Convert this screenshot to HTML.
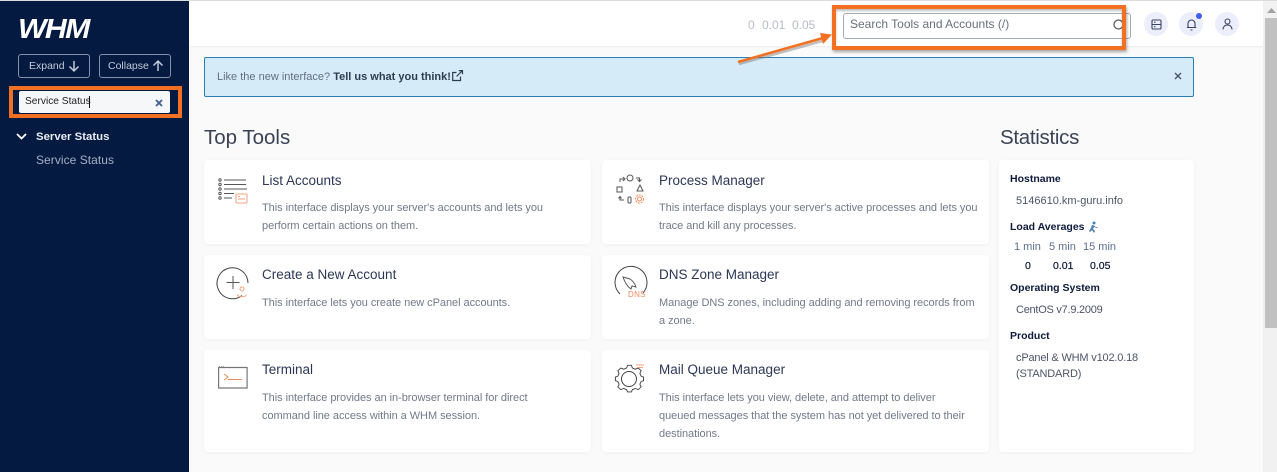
<!DOCTYPE html>
<html lang="en"><head><meta charset="utf-8"><title>WHM</title>
<style>
html,body{margin:0;padding:0;width:1277px;height:472px;overflow:hidden;background:#fafafa;font-family:"Liberation Sans",sans-serif}
.a{position:absolute}
.t{position:absolute;white-space:nowrap}
.card{position:absolute;background:#fff;border-radius:4px;box-shadow:0 1px 4px rgba(0,0,0,.04)}
.h{font-size:13.5px;color:#2a3756;line-height:16px}
.d{font-size:11px;color:#727989;letter-spacing:-.05px;line-height:16px;margin-top:1px}
.sh{font-size:10.5px;font-weight:bold;color:#0c1a3c;line-height:14px;margin-top:1px}
.sv{font-size:11px;color:#4d5468;line-height:14px;margin-top:1px}
.btn{position:absolute;top:54px;height:22px;border:1px solid #8390a8;border-radius:3px;box-sizing:content-box;color:#c3cad8;font-size:10.5px;line-height:22px}
.circ{position:absolute;top:12px;width:24px;height:24px;border-radius:50%;background:#eceefb}
svg{position:absolute;overflow:visible}
</style></head><body>
<div class="a" style="left:0;top:0;width:1277px;height:1px;background:#dcdcdc"></div>
<!-- sidebar -->
<div class="a" style="left:0;top:1px;width:189px;height:471px;background:#041a40"></div>
<div class="t" style="left:18px;top:14px;font-size:27.5px;line-height:30px;font-weight:bold;font-style:italic;color:#fff;letter-spacing:-1.5px;transform:scaleX(1.1);transform-origin:left">WHM</div>
<div class="t" style="left:86px;top:18px;font-size:4px;line-height:5px;color:#aab">®</div>
<div class="btn" style="left:18px;width:70px"><span class="t" style="left:10px;top:0">Expand</span>
<svg style="left:49px;top:5px" width="12" height="12" fill="none" stroke="#c3cad8" stroke-width="1.5"><path d="M6 1v10M1.500 6.500L6 11l4.500-4.500"/></svg></div>
<div class="btn" style="left:99px;width:70px"><span class="t" style="left:8px;top:0">Collapse</span>
<svg style="left:52px;top:5px" width="12" height="12" fill="none" stroke="#c3cad8" stroke-width="1.5"><path d="M6 11V1M1.500 5.500L6 1l4.500 4.500"/></svg></div>
<div class="a" style="left:9px;top:86px;width:173px;height:32px;box-sizing:border-box;border:4px solid #f36f21"></div>
<div class="a" style="left:19px;top:91px;width:151px;height:22px;background:#f6f7f9;border-radius:2px"></div>
<div class="t" style="left:25px;top:95px;font-size:10.2px;line-height:14px;color:#222">Service Status</div>
<div class="a" style="left:89px;top:96px;width:1px;height:12px;background:#111"></div>
<svg style="left:155px;top:99px" width="8" height="8" fill="none" stroke="#3f5e94" stroke-width="1.800"><path d="M1 1l6 6M7 1l-6 6"/></svg>
<svg style="left:16px;top:133px" width="11" height="7" fill="none" stroke="#fff" stroke-width="1.800"><path d="M1 1l4.500 4.500L10 1"/></svg>
<div class="t" style="left:36px;top:129px;font-size:11.4px;line-height:16px;font-weight:bold;color:#e8ebf2">Server Status</div>
<div class="t" style="left:36px;top:152px;font-size:12px;line-height:16px;letter-spacing:.05px;color:#a6afc4">Service Status</div>
<!-- header -->
<div class="a" style="left:189px;top:1px;width:1074px;height:45px;background:#fff;box-shadow:0 1px 2px rgba(0,0,0,.06)"></div>
<div class="t" style="left:748px;top:17px;font-size:12px;line-height:16px;color:#b8bcc6">0</div>
<div class="t" style="left:762px;top:17px;font-size:12px;line-height:16px;color:#b8bcc6">0.01</div>
<div class="t" style="left:792px;top:17px;font-size:12px;line-height:16px;color:#b8bcc6">0.05</div>
<div class="a" style="left:843px;top:13px;width:286px;height:24px;border:1px solid #a4aab8;border-radius:3px;background:#fff"></div>
<div class="t" style="left:850px;top:16px;font-size:12px;line-height:16px;color:#6a6f7c">Search Tools and Accounts (/)</div>
<svg style="left:1113px;top:19px" width="12" height="12" fill="none" stroke="#555" stroke-width="1.200"><circle cx="5.500" cy="5.500" r="4.500"/></svg>
<div class="a" style="left:832px;top:5px;width:294px;height:45px;box-sizing:border-box;border:4px solid #f36f21;box-shadow:1px 2px 3px rgba(0,0,0,.35),inset 0 2px 2px rgba(0,0,0,.25)"></div>
<div class="circ" style="left:1144px"></div>
<svg style="left:1151px;top:19px" width="11" height="11" fill="none" stroke="#3b4260" stroke-width="1.100"><rect x="1" y="1" width="9" height="9" rx="1"/><path d="M1 5.500h9M3 3.200h1.500M3 7.700h1.500"/></svg>
<div class="circ" style="left:1179px"></div>
<svg style="left:1186px;top:18px" width="11" height="13" fill="none" stroke="#3b4260" stroke-width="1.100"><path d="M2 9.500V5.500a3.500 3.500 0 0 1 7 0v4M.8 9.500h9.400M4.500 12h2"/></svg>
<div class="a" style="left:1196px;top:13px;width:6px;height:6px;border-radius:50%;background:#3f5ef0"></div>
<div class="circ" style="left:1215px"></div>
<svg style="left:1222px;top:18px" width="11" height="12" fill="none" stroke="#3b4260" stroke-width="1.100"><circle cx="5.500" cy="3.500" r="2.500"/><path d="M1 11.500c.3-3 2-4.500 4.500-4.500S9.700 8.500 10 11.500"/></svg>
<!-- scrollbar -->
<div class="a" style="left:1263px;top:1px;width:14px;height:471px;background:#f1f1f1"></div>
<div class="a" style="left:1265px;top:18px;width:12px;height:310px;background:#c1c1c1"></div>
<svg style="left:1267px;top:8px" width="9" height="5"><path d="M0 5L4.500 0 9 5z" fill="#a3a3a3"/></svg>
<!-- banner -->
<div class="a" style="left:204px;top:57px;width:988px;height:38px;background:#d6ebf8;border:1px solid #2a7db5;border-radius:2px"></div>
<div class="t" style="left:217px;top:69px;font-size:11px;line-height:16px;color:#61707f">Like the new interface? <b style="color:#2b3d50">Tell us what you think!</b></div>
<svg style="left:452px;top:70px" width="11" height="11" fill="none" stroke="#2b3d50" stroke-width="1.200"><path d="M8.500 6.500V10.500H.7V2.500H4.500M4.500 6.500L10.500.6M6.800.6h3.700v3.700"/></svg>
<svg style="left:1174px;top:72px" width="8" height="8" fill="none" stroke="#4a5568" stroke-width="1.400"><path d="M1 1l6 6M7 1l-6 6"/></svg>
<!-- annotation arrow -->
<svg style="left:737px;top:30px" width="100" height="36"><path d="M1 32L88 8" stroke="#777" stroke-width="2.500" opacity=".45" transform="translate(1 2)"/><path d="M1 32L86 8" stroke="#f36f21" stroke-width="2.500"/><path d="M95 4.500L83 3l3 11z" fill="#f36f21"/></svg>
<!-- headings -->
<div class="t" style="left:204px;top:125px;font-size:20.5px;line-height:26px;color:#3a4356">Top Tools</div>
<div class="t" style="left:1000px;top:125px;font-size:20.5px;line-height:26px;letter-spacing:-.3px;color:#3a4356">Statistics</div>
<!-- cards -->
<div class="card" style="left:204px;top:160px;width:387px;height:84px"></div>
<div class="card" style="left:602px;top:160px;width:387px;height:84px"></div>
<div class="card" style="left:204px;top:255px;width:387px;height:84px"></div>
<div class="card" style="left:602px;top:255px;width:387px;height:84px"></div>
<div class="card" style="left:204px;top:350px;width:387px;height:102px"></div>
<div class="card" style="left:602px;top:350px;width:387px;height:102px"></div>
<div class="card" style="left:999px;top:160px;width:195px;height:292px"></div>
<!-- card text -->
<div class="t h" style="left:262px;top:173px">List Accounts</div>
<div class="t d" style="left:262px;top:199px">This interface displays your server's accounts and lets you</div>
<div class="t d" style="left:262px;top:217px">perform certain actions on them.</div>
<div class="t h" style="left:659px;top:173px">Process Manager</div>
<div class="t d" style="left:659px;top:199px">This interface displays your server's active processes and lets you</div>
<div class="t d" style="left:659px;top:217px">trace and kill any processes.</div>
<div class="t h" style="left:262px;top:267px">Create a New Account</div>
<div class="t d" style="left:262px;top:294px">This interface lets you create new cPanel accounts.</div>
<div class="t h" style="left:659px;top:267px">DNS Zone Manager</div>
<div class="t d" style="left:659px;top:294px">Manage DNS zones, including adding and removing records from</div>
<div class="t d" style="left:659px;top:312px">a zone.</div>
<div class="t h" style="left:262px;top:362px">Terminal</div>
<div class="t d" style="left:262px;top:389px">This interface provides an in-browser terminal for direct</div>
<div class="t d" style="left:262px;top:407px">command line access within a WHM session.</div>
<div class="t h" style="left:659px;top:362px">Mail Queue Manager</div>
<div class="t d" style="left:659px;top:389px">This interface lets you view, delete, and attempt to deliver</div>
<div class="t d" style="left:659px;top:407px">queued messages that the system has not yet delivered to their</div>
<div class="t d" style="left:659px;top:425px">destinations.</div>
<!-- icons -->
<svg style="left:218px;top:178px" width="32" height="28" fill="none"><g stroke="#555" stroke-width="1"><circle cx="2" cy="2" r="1.200"/><circle cx="2" cy="6.500" r="1.200"/><circle cx="2" cy="11" r="1.200"/><circle cx="2" cy="15.500" r="1.200"/><circle cx="2" cy="20" r="1.200"/><path d="M6 2h22M6 6.500h22M6 11h23M6 15.500h10M6 20h8"/></g><rect x="18" y="16" width="11" height="9" rx="1" stroke="#f4a27c" stroke-width="1"/><path d="M20 21h7M20 18.500h2" stroke="#f4a27c"/></svg>
<svg style="left:217px;top:267px" width="34" height="34" fill="none"><path d="M25 28.500A15.500 15.500 0 1 1 31 16" stroke="#444" stroke-width="1"/><path d="M16 9v13M9.500 15.500h13" stroke="#555" stroke-width="1"/><circle cx="25" cy="22" r="2" stroke="#f4a27c"/><path d="M20.500 27.500c.5 3 8 3 9 0" stroke="#f4a27c"/></svg>
<svg style="left:218px;top:366px" width="30" height="25" fill="none"><path d="M.6 1.500h28.500v20.500H.6z" stroke="#777" stroke-width="1.200"/><path d="M1 .5h6" stroke="#999" stroke-dasharray="1 1"/><path d="M6 8l4 3-4 3M10 13.500h14" stroke="#f08a5c" stroke-width="1"/></svg>
<svg style="left:615px;top:174px" width="32" height="30" fill="none" stroke="#555" stroke-width="1"><circle cx="15" cy="4" r="3"/><rect x="2" y="13" width="5" height="5"/><path d="M25 11l3 6h-6z"/><rect x="13" y="23" width="3" height="6" rx="1"/><path d="M5 8V5h4M8 3l2 2-2 2M21 4h3.500v3M22.500 5.500l2 2 2-2M5 23v3h4M3.500 24.500l1.500-2 1.500 2"/><g stroke="#f08a5c"><circle cx="24.500" cy="25" r="2"/><circle cx="24.500" cy="25" r="4" stroke-dasharray="2 1"/></g></svg>
<svg style="left:614px;top:267px" width="34" height="34" fill="none"><path d="M6 27A16 16 0 1 1 29 26" stroke="#444"/><path d="M9 10l7 2c3 2 5 5 6 8l-4-1-1 3c-3-2-6-6-8-12z" stroke="#555"/><text x="14" y="30" font-family="Liberation Sans,sans-serif" font-size="8" fill="#f08a5c" letter-spacing=".3">DNS</text></svg>
<svg style="left:613px;top:364px" width="34" height="32" fill="none"><path d="M15 1.500h4l1 3 3 1.300 3-1.300 3 3-1.300 3 1.300 3 2.500 1v4l-2.500 1-1.300 3 1.300 3-3 3-3-1.300-3 1.300-1 2.500h-4l-1-2.500-3-1.300-3 1.300-3-3 1.300-3-1.300-3-2.500-1v-4l2.500-1 1.300-3-1.300-3 3-3 3 1.300 3-1.300z" stroke="#444" transform="translate(0 0) scale(.97 .9)"/><circle cx="16" cy="15" r="7.500" stroke="#444"/><path d="M23 1h8M24 3.500h6" stroke="#f4a27c"/></svg>
<!-- stats -->
<div class="t sh" style="left:1010px;top:171px">Hostname</div>
<div class="t sv" style="left:1016px;top:193px">5146610.km-guru.info</div>
<div class="t sh" style="left:1010px;top:219px">Load Averages</div>
<svg style="left:1088px;top:221px" width="10" height="12" fill="#4a7fb0"><circle cx="6" cy="2" r="1.500"/><path d="M5 4l3 2 2 0-1 1-3-1-1 2 2 2-1 2-2-3-2 2-1-1 2-3 1-3z"/></svg>
<div class="t sv" style="left:1014px;top:239px;color:#5a6f92">1 min</div>
<div class="t sv" style="left:1049px;top:239px;color:#5a6f92">5 min</div>
<div class="t sv" style="left:1083px;top:239px;color:#5a6f92">15 min</div>
<div class="t sh" style="left:1025px;top:258px;font-weight:normal;-webkit-text-stroke:.2px #0c1a3c">0</div>
<div class="t sh" style="left:1053px;top:258px;font-weight:normal;-webkit-text-stroke:.2px #0c1a3c">0.01</div>
<div class="t sh" style="left:1090px;top:258px;font-weight:normal;-webkit-text-stroke:.2px #0c1a3c">0.05</div>
<div class="t sh" style="left:1010px;top:280px">Operating System</div>
<div class="t sv" style="left:1016px;top:302px;letter-spacing:-.25px">CentOS v7.9.2009</div>
<div class="t sh" style="left:1010px;top:328px">Product</div>
<div class="t sv" style="left:1016px;top:350px;letter-spacing:-.18px">cPanel &amp; WHM v102.0.18</div>
<div class="t sv" style="left:1016px;top:366px;letter-spacing:-.18px">(STANDARD)</div>
</body></html>
